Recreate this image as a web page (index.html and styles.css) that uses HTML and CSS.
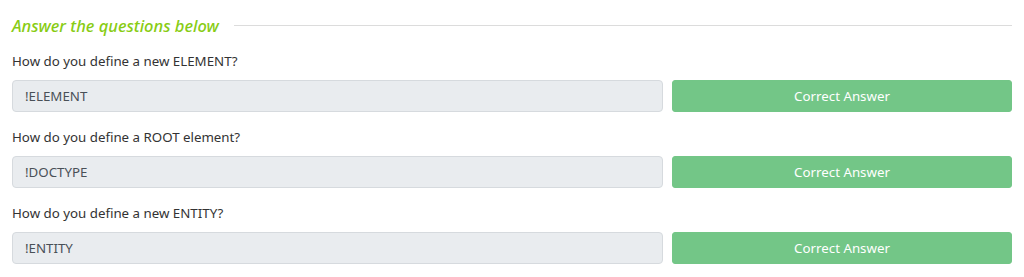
FILE: index.html
```html
<!DOCTYPE html>
<html lang="en">
<head>
    <meta charset="UTF-8">
    <title>Questions</title>
    <link rel="stylesheet" href="styles.css">
</head>
<body>
<div class="task">
    <div class="task-title">
        <span class="title-text">Answer the questions below</span>
        <span class="title-line"></span>
    </div>

    <div class="question">
        <p class="q-text">How do you define a new ELEMENT?</p>
        <div class="q-row">
            <input class="answer" type="text" value="!ELEMENT" readonly>
            <button class="btn-correct">Correct Answer</button>
        </div>
    </div>

    <div class="question">
        <p class="q-text">How do you define a ROOT element?</p>
        <div class="q-row">
            <input class="answer" type="text" value="!DOCTYPE" readonly>
            <button class="btn-correct">Correct Answer</button>
        </div>
    </div>

    <div class="question">
        <p class="q-text">How do you define a new ENTITY?</p>
        <div class="q-row">
            <input class="answer" type="text" value="!ENTITY" readonly>
            <button class="btn-correct">Correct Answer</button>
        </div>
    </div>
</div>
</body>
</html>
```

FILE: styles.css
```css
* {
    margin: 0;
    padding: 0;
    box-sizing: border-box;
}

body {
    background: #fff;
    font-family: "Noto Sans", "Open Sans", sans-serif;
    color: #333;
}

.task {
    padding: 14px 12px 0 12px;
}

.task-title {
    display: flex;
    align-items: center;
    height: 22px;
}

.title-text {
    color: #88cc14;
    font-style: italic;
    font-weight: 500;
    font-size: 16.5px;
    white-space: nowrap;
}

.title-line {
    flex: 1;
    height: 1px;
    background: #dcdcdc;
    margin-left: 15px;
}

.question {
    margin-top: 16px;
}

.q-text {
    font-size: 13.3px;
    line-height: 18px;
    height: 18px;
}

.q-row {
    display: flex;
    gap: 9px;
    margin-top: 10px;
    height: 32px;
}

.answer {
    width: 651px;
    height: 32px;
    background: #e9ecef;
    border: 1px solid #d6dade;
    border-radius: 4px;
    padding: 0 12px;
    font-family: inherit;
    font-size: 13.3px;
    color: #495057;
    outline: none;
}

.btn-correct {
    flex: 1;
    height: 32px;
    background: #73c687;
    border: 1px solid #73c687;
    border-radius: 3px;
    color: #fff;
    font-family: inherit;
    font-size: 13.3px;
}
```
